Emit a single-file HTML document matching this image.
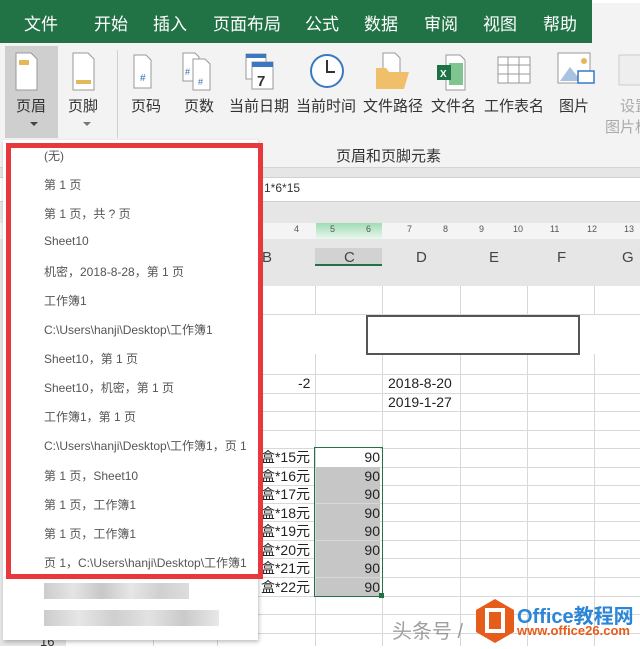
<!DOCTYPE html>
<html><head><meta charset="utf-8"><style>
*{margin:0;padding:0;box-sizing:border-box}
body{width:640px;height:646px;overflow:hidden;position:relative;background:#fff;font-family:"Liberation Sans","Noto Sans CJK SC",sans-serif;color:#222}
.abs{position:absolute}
.tab{position:absolute;top:10px;color:#fff;font-size:17px}
.lbl{position:absolute;top:95px;font-size:15px;color:#333;white-space:nowrap}
.hl{position:absolute;left:0;width:640px;height:1px;background:#d8d8d8}
.vl{position:absolute;top:286px;width:1px;height:360px;background:#d8d8d8}
.mi{position:absolute;left:44px;font-size:12px;color:#555;white-space:nowrap}
.n{position:absolute;left:316px;width:64px;height:18px;text-align:right;font-size:14px;color:#222;line-height:18px;background:#c6c6c6}
.b{position:absolute;right:330px;font-size:14px;line-height:18px;color:#222;white-space:nowrap}
.ch{position:absolute;top:249px;font-size:15px;color:#444;text-align:center}
.rn{position:absolute;top:224px;font-size:9px;color:#555}
</style></head><body>
<!-- tabs -->
<div class="abs" style="left:0;top:0;width:592px;height:43px;background:#217346"></div>
<div class="abs" style="left:592px;top:3px;width:48px;height:40px;background:#f3f3f3"></div>
<div class="tab" style="left:24px">文件</div>
<div class="tab" style="left:94px">开始</div>
<div class="tab" style="left:153px">插入</div>
<div class="tab" style="left:213px">页面布局</div>
<div class="tab" style="left:305px">公式</div>
<div class="tab" style="left:364px">数据</div>
<div class="tab" style="left:424px">审阅</div>
<div class="tab" style="left:483px">视图</div>
<div class="tab" style="left:543px">帮助</div>
<!-- ribbon -->
<div class="abs" style="left:0;top:43px;width:640px;height:125px;background:#f3f3f3;border-bottom:1px solid #d5d5d5"></div>
<div class="abs" style="left:5px;top:46px;width:53px;height:92px;background:#cfcfcf"></div>
<div class="abs" style="left:117px;top:50px;width:1px;height:88px;background:#d0d0d0"></div>
<svg class="abs" style="left:0;top:43px" width="640" height="55">
 <g fill="#fff" stroke="#999"><path d="M16 10h15l6 6v31h-21z"/><path d="M73 10h15l6 6v31h-21z"/><path d="M134 12h12l5 5v28h-17z"/></g>
 <rect x="19" y="17" width="10" height="5" fill="#e3b85a"/><rect x="76" y="37" width="15" height="4" fill="#e3b85a"/>
 <text x="140" y="38" font-size="10" fill="#2f6fb0" font-family="Liberation Sans">#</text>
 <g fill="#fff" stroke="#999"><path d="M183 10h12l4 4v24h-16z"/><path d="M193 16h12l5 5v26h-17z"/></g>
 <text x="185" y="32" font-size="9" fill="#2f6fb0">#</text><text x="198" y="42" font-size="9" fill="#2f6fb0">#</text>
 <rect x="246" y="11" width="20" height="25" fill="#fff" stroke="#999"/><rect x="246" y="11" width="20" height="4" fill="#3a78c2"/>
 <rect x="252" y="19" width="21" height="27" fill="#fff" stroke="#999"/><rect x="252" y="19" width="21" height="5" fill="#3a78c2"/>
 <text x="257" y="43" font-size="15" fill="#333" font-weight="bold">7</text>
 <circle cx="327" cy="28" r="16" fill="#fff" stroke="#3a78c2" stroke-width="2"/><path d="M327 17v12h8" stroke="#333" stroke-width="2" fill="none"/>
 <path d="M383 10h12l5 5v22h-17z" fill="#fff" stroke="#999"/><path d="M376 25h10l3 4h20l-5 17h-28z" fill="#f0bf6a"/>
 <path d="M446 12h14l5 5v30h-19z" fill="#fff" stroke="#999"/><rect x="449" y="20" width="14" height="22" fill="#7fc58f"/>
 <rect x="437" y="22" width="14" height="15" fill="#1e7145"/><text x="440" y="34" font-size="10" fill="#fff" font-weight="bold">X</text>
 <g stroke="#999" fill="#fff"><rect x="498" y="14" width="32" height="26"/><path d="M498 22h32M498 31h32M508 14v26M519 14v26" fill="none"/></g>
 <rect x="558" y="10" width="32" height="30" fill="#fff" stroke="#999"/><path d="M560 38l10-14 8 10 6-6 6 10z" fill="#a8c3e2"/><circle cx="584" cy="18" r="3" fill="#e3b85a"/>
 <rect x="578" y="28" width="16" height="12" fill="#fff" stroke="#3a78c2" stroke-width="1.5"/>
 <rect x="619" y="12" width="24" height="30" fill="#eee" stroke="#ccc"/>
</svg>
<div class="lbl" style="left:16px">页眉</div><div class="lbl" style="left:68px">页脚</div>
<div class="abs" style="left:30px;top:122px;border:4px solid transparent;border-top:4px solid #444"></div>
<div class="abs" style="left:83px;top:122px;border:4px solid transparent;border-top:4px solid #777"></div>
<div class="lbl" style="left:131px">页码</div><div class="lbl" style="left:184px">页数</div>
<div class="lbl" style="left:229px">当前日期</div><div class="lbl" style="left:296px">当前时间</div>
<div class="lbl" style="left:363px">文件路径</div><div class="lbl" style="left:431px">文件名</div>
<div class="lbl" style="left:484px">工作表名</div><div class="lbl" style="left:559px">图片</div>
<div class="lbl" style="left:620px;color:#aaa">设置</div><div class="lbl" style="left:605px;top:116px;color:#aaa">图片格</div>
<div class="abs" style="left:336px;top:145px;font-size:15px;color:#333">页眉和页脚元素</div>
<!-- formula bar -->
<div class="abs" style="left:0;top:168px;width:640px;height:9px;background:#e6e6e6"></div>
<div class="abs" style="left:0;top:177px;width:640px;height:25px;background:#fff;border-top:1px solid #d0d0d0;border-bottom:1px solid #d0d0d0"></div>
<div class="abs" style="left:264px;top:181px;font-size:12px;color:#333">1*6*15</div>
<div class="abs" style="left:0;top:202px;width:640px;height:84px;background:#e6e6e6"></div>
<div class="abs" style="left:0;top:223px;width:640px;height:16px;background:#f4f4f4"></div>
<div class="abs" style="left:316px;top:223px;width:66px;height:16px;background:linear-gradient(#9fdcb5,#eaf7ef)"></div>
<span class="rn" style="left:294px">4</span><span class="rn" style="left:330px">5</span><span class="rn" style="left:366px">6</span><span class="rn" style="left:407px">7</span><span class="rn" style="left:443px">8</span><span class="rn" style="left:479px">9</span><span class="rn" style="left:513px">10</span><span class="rn" style="left:550px">11</span><span class="rn" style="left:587px">12</span><span class="rn" style="left:624px">13</span>
<div class="abs" style="left:0;top:248px;width:640px;height:18px;background:#e6e6e6"></div>
<div class="abs" style="left:315px;top:248px;width:67px;height:18px;background:#d2d2d2;border-bottom:2px solid #217346"></div>
<div class="ch" style="left:262px">B</div><div class="ch" style="left:344px">C</div><div class="ch" style="left:416px">D</div><div class="ch" style="left:489px">E</div><div class="ch" style="left:557px">F</div><div class="ch" style="left:622px">G</div>
<!-- grid -->
<div class="hl" style="top:314px"></div><div class="hl" style="top:374px"></div><div class="hl" style="top:393px"></div><div class="hl" style="top:411px"></div><div class="hl" style="top:430px"></div><div class="hl" style="top:448px"></div><div class="hl" style="top:467px"></div><div class="hl" style="top:485px"></div><div class="hl" style="top:503px"></div><div class="hl" style="top:521px"></div><div class="hl" style="top:540px"></div><div class="hl" style="top:558px"></div><div class="hl" style="top:577px"></div><div class="hl" style="top:596px"></div><div class="hl" style="top:614px"></div><div class="hl" style="top:633px"></div>
<div class="vl" style="left:153px"></div><div class="vl" style="left:217px"></div><div class="vl" style="left:315px"></div><div class="vl" style="left:382px"></div><div class="vl" style="left:460px"></div><div class="vl" style="left:527px"></div><div class="vl" style="left:594px"></div>
<div class="abs" style="left:262px;top:315px;width:378px;height:39px;background:#fff"></div>
<div class="abs" style="left:366px;top:315px;width:214px;height:40px;border:2px solid #555;background:#fff"></div>
<div class="abs" style="left:298px;top:375px;font-size:14px">-2</div>
<div class="abs" style="left:388px;top:375px;font-size:14px">2018-8-20</div>
<div class="abs" style="left:388px;top:394px;font-size:14px">2019-1-27</div>
<div class="n" style="top:448px;background:#fff">90</div><div class="n" style="top:467px">90</div><div class="n" style="top:485px">90</div><div class="n" style="top:504px">90</div><div class="n" style="top:522px">90</div><div class="n" style="top:541px">90</div><div class="n" style="top:559px">90</div><div class="n" style="top:578px">90</div>
<div class="abs" style="left:314px;top:447px;width:69px;height:150px;border:1.5px solid #217346"></div>
<div class="abs" style="left:379px;top:593px;width:5px;height:5px;background:#217346"></div>
<div class="b" style="top:448px">盒*15元</div><div class="b" style="top:467px">盒*16元</div><div class="b" style="top:485px">盒*17元</div><div class="b" style="top:504px">盒*18元</div><div class="b" style="top:522px">盒*19元</div><div class="b" style="top:541px">盒*20元</div><div class="b" style="top:559px">盒*21元</div><div class="b" style="top:578px">盒*22元</div>
<div class="abs" style="left:0;top:286px;width:12px;height:360px;background:#e6e6e6"></div>
<div class="abs" style="left:10px;top:634px;width:56px;height:12px;background:#e6e6e6"></div>
<div class="abs" style="left:40px;top:634px;font-size:13px;color:#333">16</div>
<!-- menu -->
<div class="abs" style="left:3px;top:140px;width:255px;height:500px;background:#fff;box-shadow:1px 2px 4px rgba(0,0,0,.25)"></div>
<div class="abs" style="left:6px;top:143px;width:257px;height:436px;border:5px solid #e8383d"></div>
<div class="mi" style="top:147px">(无)</div>
<div class="mi" style="top:176px">第 1 页</div>
<div class="mi" style="top:205px">第 1 页，共 ? 页</div>
<div class="mi" style="top:234px">Sheet10</div>
<div class="mi" style="top:263px"> 机密，2018-8-28，第 1 页</div>
<div class="mi" style="top:292px">工作簿1</div>
<div class="mi" style="top:321px">C:\Users\hanji\Desktop\工作簿1</div>
<div class="mi" style="top:350px">Sheet10，第 1 页</div>
<div class="mi" style="top:379px">Sheet10，机密，第 1 页</div>
<div class="mi" style="top:408px">工作簿1，第 1 页</div>
<div class="mi" style="top:437px">C:\Users\hanji\Desktop\工作簿1，页 1</div>
<div class="mi" style="top:467px">第 1 页，Sheet10</div>
<div class="mi" style="top:496px">第 1 页，工作簿1</div>
<div class="mi" style="top:525px">第 1 页，工作簿1</div>
<div class="mi" style="top:554px">页 1，C:\Users\hanji\Desktop\工作簿1</div>
<div class="abs" style="left:44px;top:583px;width:145px;height:16px;background:linear-gradient(90deg,#ccc,#e4e4e4,#c8c8c8,#e6e6e6,#d0d0d0,#ddd)"></div>
<div class="abs" style="left:44px;top:610px;width:175px;height:16px;background:linear-gradient(90deg,#ccc,#e6e6e6,#cfcfcf,#e2e2e2,#cacaca,#e8e8e8)"></div>
<!-- watermark -->
<div class="abs" style="left:392px;top:615px;font-size:20px;color:#888;opacity:.8">头条号 /</div>
<svg class="abs" style="left:473px;top:597px" width="44" height="48"><path d="M22 2l19 11v22l-19 11-19-11v-22z" fill="#e65c1a"/><rect x="14" y="13" width="16" height="21" fill="none" stroke="#fff" stroke-width="4"/></svg>
<div class="abs" style="left:517px;top:600px;font-size:20px;font-weight:bold;color:#2b86d8">Office教程网</div>
<div class="abs" style="left:517px;top:623px;font-size:13px;font-weight:bold;color:#e65c1a">www.office26.com</div>
</body></html>
